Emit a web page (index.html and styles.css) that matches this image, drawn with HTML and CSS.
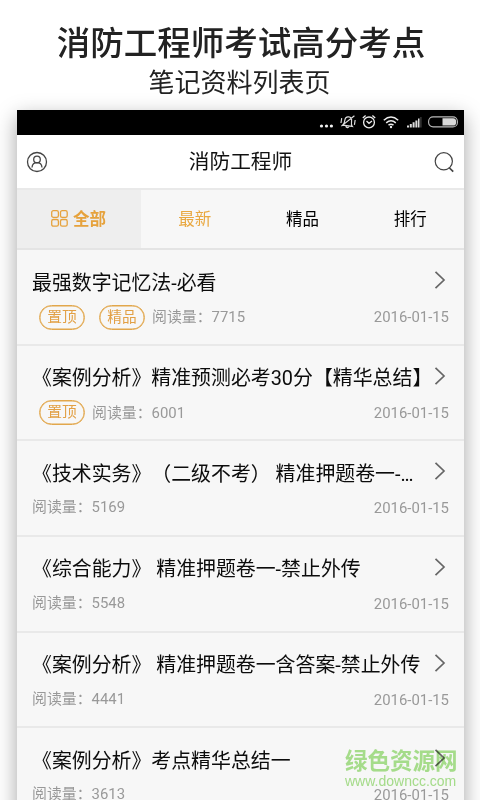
FILE: index.html
```
<!DOCTYPE html>
<html lang="zh-CN">
<head>
<meta charset="utf-8">
<title>消防工程师</title>
<link rel="stylesheet" href="styles.css">
</head>
<body>
<svg width="0" height="0" class="defs">
  <symbol id="chevron" viewBox="0 0 12 20"><path d="M1.5 1.8 10 10 1.5 18.2" fill="none" stroke="#666" stroke-width="1.7"/></symbol>
</svg>
<div class="page">
  <header class="promo">
    <h1>消防工程师考试高分考点</h1>
    <p>笔记资料列表页</p>
  </header>
  <main class="phone">
    <div class="status">
      <svg class="dots" width="14" height="16" viewBox="0 0 14 16" fill="#f2f2f2"><circle cx="2.500" cy="12" r="1.6"/><circle cx="7.500" cy="12" r="1.6"/><circle cx="12.400" cy="12" r="1.6"/></svg>
      <svg class="bell" width="16" height="16" viewBox="0 0 16 16" fill="none" stroke="#ddd" stroke-width="1.2"><path d="M3.2 11.8h9.6c-1.2-1-1.4-2-1.4-5 0-2.6-1.3-4-3.4-4s-3.4 1.4-3.4 4c0 3-.2 4-1.4 5zM6.5 12.5c.3 1.6 2.7 1.6 3 0M13.500 1 2 13M1.2 5v5M14.8 5v5"/></svg>
      <svg class="alarm" width="14" height="16" viewBox="0 0 14 16" fill="none" stroke="#eee" stroke-width="1.3"><circle cx="7" cy="8.4" r="5.4"/><path d="M4.5 7 7 9.3 10 7M.8 4 3.6 1.6M13.2 4l-2.8-2.4"/></svg>
      <svg class="wifi" width="16" height="14" viewBox="0 0 16 14" fill="none" stroke="#eee" stroke-width="1.5"><path d="M.8 5.2Q8-1.3 15.2 5.2M3.2 7.8q4.800-4 9.600 0M5.500 10.200q2.500-2 5 0"/><circle cx="8" cy="12" r="1.200" fill="#eee" stroke="none"/></svg>
      <svg class="signal" width="15" height="12" viewBox="0 0 15 12" fill="#ddd"><path d="M0 9.500h2V11.500H0zM2.800 8h2v3.500h-2zM5.600 6.200h2v5.300h-2zM8.400 4.500h2v7h-2zM11 2.500h1.500v9H11z"/><path d="M13.300 1h1.200v10.500h-1.200z" fill="#444"/></svg>
      <svg class="battery" width="30" height="12" viewBox="0 0 30 12"><rect x=".6" y=".9" width="28.800" height="10" rx="4.500" fill="none" stroke="#bbb" stroke-width="1.100"/><path d="M14.500 2.300h10.700q3 0 3 3.600t-3 3.600H14.500z" fill="#d8d8d8"/></svg>
    </div>
    <div class="bar">
      <svg width="22" height="22" viewBox="0 0 22 22" fill="none" stroke="#444" stroke-width="1.300"><circle cx="11" cy="11" r="9.500"/><circle cx="11" cy="8.500" r="3.300"/><path d="M6 16.500c.3-3.200 2.200-4.800 5-4.800s4.700 1.600 5 4.800"/></svg>
      <h2>消防工程师</h2>
      <svg width="22" height="22" viewBox="0 0 22 22" fill="none" stroke="#444" stroke-width="1.200"><circle cx="10.800" cy="10.300" r="8.600"/><path d="m16 16.500 4.200 4.200" stroke-width="1.700"/></svg>
    </div>
    <nav class="tabs">
      <a class="tab all"><svg width="17" height="17" viewBox="0 0 17 17" fill="none" stroke="#e6a23c" stroke-width="1.300"><rect x=".7" y=".7" width="6.700" height="6.700" rx="1.700"/><rect x="9.500" y=".7" width="6.700" height="6.700" rx="1.700"/><rect x=".7" y="9.500" width="6.700" height="6.700" rx="1.700"/><rect x="9.500" y="9.500" width="6.700" height="6.700" rx="1.700"/></svg>全部</a>
      <a class="tab newest">最新</a>
      <a class="tab">精品</a>
      <a class="tab">排行</a>
    </nav>
    <section class="list">
      <article class="row"><div class="top"><h3>最强数字记忆法-必看</h3><svg class="chev"><use href="#chevron"/></svg></div><div class="meta"><span class="tag">置顶</span><span class="tag">精品</span><span class="reads">阅读量：7715</span><time>2016-01-15</time></div></article>
      <article class="row"><div class="top"><h3>《案例分析》精准预测必考30分【精华总结】</h3><svg class="chev"><use href="#chevron"/></svg></div><div class="meta"><span class="tag">置顶</span><span class="reads">阅读量：6001</span><time>2016-01-15</time></div></article>
      <article class="row plain"><div class="top"><h3>《技术实务》（二级不考） 精准押题卷一-<span class="dotted">...</span></h3><svg class="chev"><use href="#chevron"/></svg></div><div class="meta"><span class="reads">阅读量：5169</span><time>2016-01-15</time></div></article>
      <article class="row plain"><div class="top"><h3>《综合能力》 精准押题卷一-禁止外传</h3><svg class="chev"><use href="#chevron"/></svg></div><div class="meta"><span class="reads">阅读量：5548</span><time>2016-01-15</time></div></article>
      <article class="row plain"><div class="top"><h3>《案例分析》 精准押题卷一含答案-禁止外传</h3><svg class="chev"><use href="#chevron"/></svg></div><div class="meta"><span class="reads">阅读量：4441</span><time>2016-01-15</time></div></article>
      <article class="row plain"><div class="top"><h3>《案例分析》考点精华总结一</h3><svg class="chev"><use href="#chevron"/></svg></div><div class="meta"><span class="reads">阅读量：3613</span><time>2016-01-15</time></div></article>
    </section>
  </main>
  <div class="mark"><b>绿色资源网</b><span>www.downcc.com</span></div>
</div>
</body>
</html>
```
FILE: styles.css
```
* { box-sizing: border-box; }
body {
  margin: 0;
  background: #fff;
  font-family: Roboto, "Noto Sans CJK SC", sans-serif;
  text-spacing-trim: space-all;
}
h1, h2, h3, p { margin: 0; font-weight: 400; white-space: nowrap; }
svg { display: block; flex: none; }
.defs { position: absolute; }
.page { position: relative; width: 480px; height: 800px; overflow: hidden; }
.promo { height: 110px; padding-top: 23px; text-align: center; color: #222; }
.promo h1 { font-size: 33.5px; line-height: 42px; font-weight: 500; padding-left: 2px; }
.promo p { font-size: 26px; line-height: 36px; padding-right: 1px; }
.phone {
  width: 447px;
  height: 720px;
  margin-left: 17px;
  background: #f7f7f7;
  box-shadow: 0 7px 20px rgba(0, 0, 0, .36);
}
.status {
  display: flex;
  align-items: center;
  justify-content: flex-end;
  height: 25px;
  padding-right: 6px;
  background: #000;
}
.dots { margin-right: 1px; }
.bell { margin-left: 6px; transform: rotate(8deg); }
.alarm { margin-left: 6px; }
.wifi { margin-left: 7px; }
.signal { margin-left: 8px; }
.battery { margin-left: 6px; }
.status svg { margin-top: -1px; }
.bar {
  display: flex;
  align-items: center;
  justify-content: space-between;
  height: 55px;
  padding: 0 9px;
  background: #fff;
  border-bottom: 2px solid #e9e9e9;
}
.bar h2 { font-size: 20.700px; line-height: 30px; color: #111; }
.tabs {
  display: flex;
  height: 60px;
  border-bottom: 2px solid #e4e4e4;
}
.tab {
  flex: 1;
  display: flex;
  align-items: center;
  justify-content: center;
  padding-bottom: 2px;
  font-size: 16.500px;
  color: #000;
}
.all { flex: 0 0 124px; gap: 5px; padding-right: 1px; background: #eee; color: #e6a23c; font-weight: 700; }
.newest { color: #e9a840; }
.row { height: 95.650px; padding: 16px 15px 0; border-bottom: 2px solid #e9e9e9; }
.top { display: flex; justify-content: space-between; height: 32px; }
.top h3 { width: 395px; padding-top: 1.500px; font-size: 19.900px; line-height: 32px; color: #0c0c0c; }
.dotted { letter-spacing: -1.200px; }
.chev { width: 12px; height: 20px; margin: 4px 3px 0 0; }
.meta {
  display: flex;
  align-items: center;
  height: 26px;
  margin-top: 6px;
  font-size: 14.900px;
  line-height: 24px;
  color: #999;
}
.plain .meta { margin-top: 5px; }
.tag {
  width: 46px;
  height: 25px;
  margin: 0 7px;
  border: 1px solid #e2a74c;
  box-shadow: inset 0 0 0 .500px #e2a74c;
  border-radius: 13px;
  text-align: center;
  line-height: 23px;
  font-size: 14.700px;
  color: #e2a045;
}
.meta time { margin-left: auto; }
.plain time { padding-top: 2px; }
.mark {
  position: absolute;
  left: 345px;
  top: 749px;
  display: flex;
  flex-direction: column;
  color: #abe38f;
  mix-blend-mode: multiply;
}
.mark b { font-size: 22.500px; line-height: 25px; }
.mark span { font: 14px/15px "Liberation Sans", sans-serif; }
```
